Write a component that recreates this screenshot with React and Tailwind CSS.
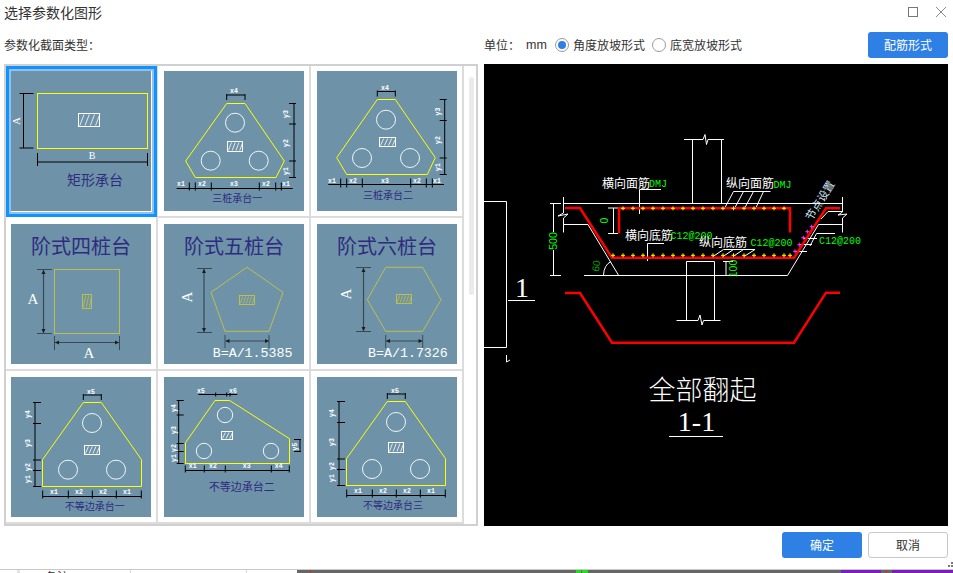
import React from "react";

const Y = "#ffff00";
const INK = "#2f2c80";
const SANS = '"Noto Sans CJK SC", sans-serif';
const SERIF = '"Liberation Serif", "Noto Sans CJK SC", serif';
const MONO = '"Liberation Mono", "Noto Sans CJK SC", monospace';
const PLAIN = '"Liberation Sans", sans-serif';

function Hatch({ x, y, w, h, color = "#fff", n = 4, dir = 1 }) {
  const step = w / n;
  const lines = [];
  for (let i = 0; i < n; i++) {
    const x0 = x + step * i + step * 0.25;
    lines.push(<line key={i} x1={x0} y1={y + h - 1} x2={x0 + (step * 0.8) * dir} y2={y + 1} stroke={color} strokeWidth="0.8" />);
  }
  return (
    <g>
      <rect x={x} y={y} width={w} height={h} fill="none" stroke={color} strokeWidth="1" />
      {lines}
    </g>
  );
}

function HDim({ y, xs, up = 3, down = 5, x0, x1 }) {
  return (
    <g stroke="#000" strokeWidth="1">
      <line x1={x0 ?? xs[0]} y1={y} x2={x1 ?? xs[xs.length - 1]} y2={y} />
      {xs.map((x) => <line key={x} x1={x} y1={y - up} x2={x} y2={y + down} />)}
    </g>
  );
}

function VDim({ x, ys, left = 5, right = 2 }) {
  return (
    <g stroke="#000" strokeWidth="1">
      <line x1={x} y1={ys[0]} x2={x} y2={ys[ys.length - 1]} />
      {ys.map((y) => <line key={y} x1={x - left} y1={y} x2={x + right} y2={y} />)}
    </g>
  );
}

function Tiny({ x, y, children }) {
  return <text x={x} y={y} fill="#fff" fontSize="6.5" fontWeight="700" fontFamily={MONO} textAnchor="middle">{children}</text>;
}
function TinyV({ x, y, children }) {
  return <text transform={`translate(${x} ${y}) rotate(-90)`} fill="#fff" fontSize="6.5" fontWeight="700" fontFamily={MONO} textAnchor="middle" dominantBaseline="middle">{children}</text>;
}
function Label({ x, y, size = 10, children }) {
  return <text x={x} y={y} fill={INK} fontSize={size} fontFamily={SANS} textAnchor="middle">{children}</text>;
}
function Poly({ points, color = Y }) {
  return <polygon points={points} fill="none" stroke={color} strokeWidth="1" />;
}
function Holes({ list, r = 9.5 }) {
  return list.map(([x, y]) => <circle key={x} cx={x} cy={y} r={r} fill="none" stroke="#fff" strokeWidth="0.9" />);
}

function Arrow({ x1, y1, x2, y2 }) {
  const v = x1 === x2;
  const a = 4;
  const b = 2;
  return (
    <g>
      <line x1={x1} y1={y1} x2={x2} y2={y2} stroke="#3a4a55" strokeWidth="1.2" />
      {v ? (
        <g fill="#1c1c1c">
          <polygon points={`${x1},${y1} ${x1 - b},${y1 + a} ${x1 + b},${y1 + a}`} />
          <polygon points={`${x2},${y2} ${x2 - b},${y2 - a} ${x2 + b},${y2 - a}`} />
        </g>
      ) : (
        <g fill="#1c1c1c">
          <polygon points={`${x1},${y1} ${x1 + a},${y1 - b} ${x1 + a},${y1 + b}`} />
          <polygon points={`${x2},${y2} ${x2 - a},${y2 - b} ${x2 - a},${y2 + b}`} />
        </g>
      )}
    </g>
  );
}

const OLIVE = "#bdbf4c";
const DIM = "#3a4a55";

function StepTitle({ children }) {
  return <text x="70" y="29.5" fill={INK} fontSize="20" fontFamily={SANS} textAnchor="middle">{children}</text>;
}

const drawings = [
  <>
    <rect x="26.5" y="22.5" width="110" height="55" fill="none" stroke={Y} strokeWidth="1" />
    <Hatch x={67.5} y={42.5} w={21} h={13} />
    <VDim x={12.5} ys={[22.5, 77]} left={4} right={10} />
    <text transform="translate(6.5 50) rotate(-90)" fill="#fff" fontSize="11" fontFamily={SERIF} textAnchor="middle" dominantBaseline="middle">A</text>
    <HDim y={91} xs={[26.5, 136.5]} up={9} down={4} />
    <text x="81" y="88" fill="#fff" fontSize="10" fontFamily={SERIF} textAnchor="middle">B</text>
    <Label x={84} y={114} size={14}>矩形承台</Label>
  </>,
  <>
    <Poly points="62.7,32.5 81,32.5 120.3,90 112,106.5 31.3,106.5 21.7,90" />
    <Holes list={[[71, 51.7], [46.7, 89.7], [94.7, 89.7]]} />
    <Hatch x={63.5} y={70.5} w={15} h={10} />
    <HDim y={24} xs={[62.7, 81]} up={1} down={5} />
    <Tiny x={70} y={22}>x4</Tiny>
    <VDim x={130} ys={[32.5, 53, 90, 106.5]} />
    <TinyV x={122} y={43}>y3</TinyV><TinyV x={122} y={72}>y2</TinyV><TinyV x={122} y={100}>y1</TinyV>
    <HDim y={117.5} xs={[25.3, 31.3, 47.3, 95.3, 111.7, 117.3]} x0={12.7} x1={128.7} up={6} down={2} />
    <Tiny x={17} y={115}>x1</Tiny><Tiny x={38} y={115}>x2</Tiny><Tiny x={70} y={115}>x3</Tiny><Tiny x={102} y={115}>x2</Tiny><Tiny x={122} y={115}>x1</Tiny>
    <Label x={73.3} y={131}>三桩承台一</Label>
  </>,
  <>
    <Poly points="60.3,28.5 78.3,28.5 118.3,86.7 110.3,103.5 29.7,103.5 19.7,86.7" />
    <Holes list={[[69, 48.7], [45, 87], [93, 87]]} />
    <Hatch x={62.5} y={66.5} w={16} h={9} />
    <HDim y={20.5} xs={[60.3, 78.3]} up={1} down={5} />
    <Tiny x={68} y={19}>x4</Tiny>
    <VDim x={127.7} ys={[28.5, 49.5, 87, 103.5]} />
    <TinyV x={121} y={40.5}>y3</TinyV><TinyV x={121} y={69}>y2</TinyV><TinyV x={121} y={96}>y1</TinyV>
    <HDim y={113.5} xs={[23.7, 29.7, 45.3, 93.7, 109.3, 115.3]} x0={11.3} x1={127} up={6} down={3} />
    <Tiny x={15} y={112}>x1</Tiny><Tiny x={36} y={112}>x2</Tiny><Tiny x={68} y={112}>x3</Tiny><Tiny x={100} y={112}>x2</Tiny><Tiny x={120} y={112}>x1</Tiny>
    <Label x={71} y={128}>三桩承台二</Label>
  </>,
  <>
    <StepTitle>阶式四桩台</StepTitle>
    <rect x="43.5" y="45.5" width="65" height="64" fill="none" stroke={OLIVE} strokeWidth="1" />
    <Hatch x={71.5} y={70.5} w={9} h={14} color={OLIVE} n={3} />
    <Arrow x1={32.5} y1={46} x2={32.5} y2={109} />
    <line x1="26" y1="45.5" x2="41" y2="45.5" stroke={DIM} />
    <line x1="26" y1="109.5" x2="41" y2="109.5" stroke={DIM} />
    <text x="22" y="80" fill="#fff" fontSize="15" fontFamily={SERIF} textAnchor="middle">A</text>
    <Arrow x1={44} y1={118.5} x2={108} y2={118.5} />
    <line x1="43.5" y1="112" x2="43.5" y2="126" stroke={DIM} />
    <line x1="108.5" y1="112" x2="108.5" y2="126" stroke={DIM} />
    <text x="78" y="134" fill="#fff" fontSize="15" fontFamily={SERIF} textAnchor="middle">A</text>
  </>,
  <>
    <StepTitle>阶式五桩台</StepTitle>
    <Poly color={OLIVE} points="83,43.3 119,68.3 105,107.3 61,107.3 47,68.3" />
    <Hatch x={75.5} y={71.5} w={15} h={9} color={OLIVE} n={5} />
    <Arrow x1={40} y1={45} x2={40} y2={108} />
    <line x1="33" y1="44.5" x2="48" y2="44.5" stroke={DIM} />
    <line x1="33" y1="108.5" x2="48" y2="108.5" stroke={DIM} />
    <text transform="translate(24.5 73) rotate(-90)" fill="#fff" fontSize="15" fontFamily={SERIF} textAnchor="middle" dominantBaseline="middle">A</text>
    <Arrow x1={61.5} y1={117} x2={105} y2={117} />
    <line x1="61" y1="111" x2="61" y2="124" stroke={DIM} />
    <line x1="105" y1="111" x2="105" y2="124" stroke={DIM} />
    <text x="48.7" y="133" fill="#fff" fontSize="13.3" fontFamily={MONO}>B=A/1.5385</text>
  </>,
  <>
    <StepTitle>阶式六桩台</StepTitle>
    <Poly color={OLIVE} points="68.7,43.3 105.7,43.3 124,75.7 105.7,107.3 68.7,107.3 50.3,75.7" />
    <Hatch x={79.5} y={70.5} w={15} h={9} color={OLIVE} n={5} />
    <Arrow x1={46.5} y1={44} x2={46.5} y2={107} />
    <line x1="39" y1="43.5" x2="54" y2="43.5" stroke={DIM} />
    <line x1="39" y1="107.5" x2="54" y2="107.5" stroke={DIM} />
    <text transform="translate(31 70) rotate(-90)" fill="#fff" fontSize="15" fontFamily={SERIF} textAnchor="middle" dominantBaseline="middle">A</text>
    <Arrow x1={69} y1={117} x2={105.5} y2={117} />
    <line x1="68.7" y1="111" x2="68.7" y2="124" stroke={DIM} />
    <line x1="105.7" y1="111" x2="105.7" y2="124" stroke={DIM} />
    <text x="51" y="133" fill="#fff" fontSize="13.3" fontFamily={MONO}>B=A/1.7326</text>
  </>,
  <>
    <Poly points="72.3,25.5 90.3,25.5 130.5,82.7 130.5,109.5 31.5,109.5 31.5,82.7" />
    <Holes list={[[81, 46], [57, 92.7], [105, 92.7]]} />
    <Hatch x={73.5} y={68.5} w={15} h={9} />
    <HDim y={18} xs={[72.3, 90.3]} up={1} down={5} />
    <Tiny x={80} y={16.5}>x5</Tiny>
    <VDim x={24} ys={[25.5, 46.5, 83, 93.5, 109.5]} left={2} right={6} />
    <TinyV x={17} y={37}>y4</TinyV><TinyV x={17} y={66}>y3</TinyV><TinyV x={17} y={90}>y2</TinyV><TinyV x={17} y={102}>y1</TinyV>
    <HDim y={119.5} xs={[31.7, 57.3, 81.3, 105.3, 130.3]} up={6} down={2} />
    <Tiny x={43} y={117}>x1</Tiny><Tiny x={68} y={117}>x2</Tiny><Tiny x={92} y={117}>x2</Tiny><Tiny x={116} y={117}>x1</Tiny>
    <Label x={83.7} y={133}>不等边承台一</Label>
  </>,
  <>
    <Poly points="51,23.5 65.7,23.5 125.5,61.7 125.5,86.5 21.5,86.5 21.5,65.7" />
    <Holes list={[[61, 38], [40, 74], [107, 74]]} r={7.7} />
    <Hatch x={57.5} y={54.5} w={11} h={8} n={3} />
    <HDim y={17.5} xs={[51.7, 62.7, 66]} x0={34.3} x1={73.3} up={2} down={2} />
    <Tiny x={37} y={15.5}>x5</Tiny><Tiny x={69} y={15.5}>x6</Tiny>
    <VDim x={14.7} ys={[23.5, 38, 66.5, 74.5, 86.5]} left={2} right={5} />
    <TinyV x={10} y={31}>y4</TinyV><TinyV x={10} y={53}>y3</TinyV><TinyV x={10} y={71}>y2</TinyV><TinyV x={10} y={81}>y1</TinyV>
    <VDim x={136} ys={[62.5, 74.5]} left={6} right={1} />
    <TinyV x={131} y={69.5}>y5</TinyV>
    <HDim y={93.5} xs={[21.3, 40.3, 61.3, 107.3, 125.3]} up={5} down={2} />
    <Tiny x={28.7} y={91}>x1</Tiny><Tiny x={49} y={91}>x2</Tiny><Tiny x={82.7} y={91}>x3</Tiny><Tiny x={114.7} y={91}>x4</Tiny>
    <Label x={77.7} y={114} size={11}>不等边承台二</Label>
  </>,
  <>
    <Poly points="70.3,24.5 88.3,24.5 128.5,81.7 128.5,108.5 29.5,108.5 29.5,81.7" />
    <Holes list={[[79, 45], [55, 92], [103, 92]]} />
    <Hatch x={71.5} y={65.5} w={15} h={10} />
    <HDim y={17} xs={[70.3, 88.3]} up={1} down={5} />
    <Tiny x={78} y={15.5}>x5</Tiny>
    <VDim x={22} ys={[24.5, 45.5, 82, 92.5, 108.5]} left={2} right={6} />
    <TinyV x={15} y={36}>y4</TinyV><TinyV x={15} y={65}>y3</TinyV><TinyV x={15} y={89}>y2</TinyV><TinyV x={15} y={101}>y1</TinyV>
    <HDim y={118.5} xs={[29.7, 55.3, 79.3, 103.3, 128.3]} up={6} down={2} />
    <Tiny x={41} y={116}>x1</Tiny><Tiny x={66} y={116}>x2</Tiny><Tiny x={90} y={116}>x2</Tiny><Tiny x={114} y={116}>x1</Tiny>
    <Label x={76} y={132}>不等边承台三</Label>
  </>,
];

const cellClass = [
  "",
  "w-[153px] h-[152px] pl-[6px] pt-[5px] border-r-2 border-b-2 border-[#dcdcdc]",
  "w-[153px] h-[152px] pl-[6px] pt-[5px] border-r-2 border-b-2 border-[#dcdcdc]",
  "w-[152px] h-[153px] pl-[5px] pt-[6px] border-r-2 border-b-2 border-[#dcdcdc]",
  "w-[153px] h-[153px] pl-[6px] pt-[6px] border-r-2 border-b-2 border-[#dcdcdc]",
  "w-[153px] h-[153px] pl-[6px] pt-[6px] border-r-2 border-b-2 border-[#dcdcdc]",
  "w-[152px] h-[153px] pl-[5px] pt-[6px] border-r-2 border-b-2 border-[#dcdcdc]",
  "w-[153px] h-[153px] pl-[6px] pt-[6px] border-r-2 border-b-2 border-[#dcdcdc]",
  "w-[153px] h-[153px] pl-[6px] pt-[6px] border-r-2 border-b-2 border-[#dcdcdc]",
];

function Thumb({ children }) {
  return (
    <svg viewBox="0 0 140 140" className="block h-[140px] w-[140px] bg-[#6e93a8]">
      {children}
    </svg>
  );
}

function Cell({ index }) {
  if (index === 0) {
    return (
      <div className="h-[152px] w-[152px] border-r-2 border-[#dcdcdc]">
        <div className="h-[151px] w-[151px] border-[3px] border-[#0f94ff]">
          <div className="h-[145px] w-[145px] border-[2px] border-[#90c0f6]">
            <Thumb>{drawings[0]}</Thumb>
          </div>
        </div>
      </div>
    );
  }
  return (
    <div className={cellClass[index]}>
      <Thumb>{drawings[index]}</Thumb>
    </div>
  );
}

function Green({ x, y, size = 10, children, fill = "#00ff00" }) {
  return <text x={x} y={y} fill={fill} fontSize={size} fontFamily={MONO}>{children}</text>;
}
function GreenV({ x, y, size = 10.5, children, fill = "#00ff00", angle = -90 }) {
  return <text transform={`translate(${x} ${y}) rotate(${angle})`} fill={fill} fontSize={size} fontFamily={PLAIN} textAnchor="middle" dominantBaseline="middle">{children}</text>;
}
function Note({ x, y, children }) {
  return <text x={x} y={y} fill="#fff" fontSize="12" fontFamily={SANS}>{children}</text>;
}

function Cad() {
  const topDots = [623, 633, 643, 653, 663, 673, 683, 693, 703, 713, 723, 733.5, 744, 754, 764, 774, 784];
  const botDots = [613, 623, 633, 643, 653, 663, 673, 683, 693, 703, 713, 723, 733.5, 744, 754, 764, 774, 784, 790];
  const pink = [[811.7, 226.7], [807.3, 231.7], [803.3, 237.7], [799.3, 244.7], [795, 251.3]];
  const plus = (x, y, c, k) => (
    <g key={k} stroke={c} strokeWidth="1">
      <line x1={x - 2} y1={y} x2={x + 2} y2={y} />
      <line x1={x} y1={y - 2} x2={x} y2={y + 2} />
    </g>
  );
  return (
    <svg viewBox="484 64 464 462" className="block h-[462px] w-[464px] bg-black">
      <g fill="none" stroke="#fff" strokeWidth="1">
        <polyline points="484,201.5 506.5,201.5 506.5,347.5 484,347.5" />
        <line x1="508" y1="300.5" x2="535" y2="300.5" />
        <polyline points="506.5,355 506.5,362 510,360" />
        <line x1="553.5" y1="203.5" x2="553.5" y2="232" />
        <line x1="553.5" y1="250" x2="553.5" y2="275.5" />
        <line x1="550" y1="203.5" x2="561" y2="203.5" />
        <line x1="550" y1="275.5" x2="561" y2="275.5" />
        <line x1="564" y1="203.5" x2="842.5" y2="203.5" />
        <polyline points="563.5,197 563.5,213 558,216 568,214 563.5,218 563.5,232.5" />
        <polyline points="563.5,224.5 588,224.5 618.7,275.5" />
        <line x1="584" y1="275.5" x2="787.5" y2="275.5" />
        <polyline points="787.5,275.5 818.5,224.5 842.5,224.5" />
        <polyline points="821,219 828,211.5 842.5,211.5" />
        <polyline points="842.5,197 842.5,212 838,215 847,214 842.5,218 842.5,232.5" />
        <line x1="692.5" y1="139.5" x2="692.5" y2="203.5" />
        <line x1="721.5" y1="139.5" x2="721.5" y2="203.5" />
        <polyline points="684,139.5 703,139.5 705,134.5 706.5,144.5 708,139.5 724,139.5" />
        <polyline points="639.5,214 639.5,189.5 661,189.5" />
        <polyline points="647.5,261 647.5,243.5 664,243.5" />
        <line x1="613.5" y1="208" x2="613.5" y2="233.5" />
        <line x1="608" y1="208" x2="618" y2="208" />
        <line x1="608" y1="233.5" x2="618" y2="233.5" />
        <path d="M603.5 275 Q604 265 611 261.5" />
        <line x1="733.5" y1="191.5" x2="770.5" y2="191.5" />
        <line x1="733.5" y1="191.5" x2="725" y2="207.5" />
        <line x1="743.5" y1="191.5" x2="735" y2="207.5" />
        <line x1="753.5" y1="191.5" x2="745" y2="207.5" />
        <line x1="763.5" y1="191.5" x2="756" y2="207.5" />
        <line x1="723.5" y1="249.5" x2="755" y2="249.5" />
        <line x1="723.5" y1="249.5" x2="713" y2="256.5" />
        <line x1="733.5" y1="249.5" x2="723" y2="256.5" />
        <line x1="743.5" y1="249.5" x2="733" y2="256.5" />
        <line x1="755" y1="249.5" x2="744" y2="256.5" />
        <line x1="726" y1="261.5" x2="726" y2="275.5" />
        <line x1="723" y1="261.5" x2="733" y2="261.5" />
        <polyline points="810,246 816.5,233.5 835,233.5" />
        <line x1="803" y1="238.5" x2="817" y2="238.5" />
        <line x1="800" y1="244.5" x2="812" y2="244.5" />
        <line x1="795" y1="251.5" x2="807" y2="251.5" />
        <polyline points="686.5,320.5 686.5,261.5 714.5,261.5 714.5,320.5" />
        <polyline points="676.5,320.5 698,320.5 700,315 702,325 703.5,320.5 720.5,320.5" />
        <line x1="669" y1="436.5" x2="723" y2="436.5" />
      </g>
      <g fill="none" stroke="#ff0000" strokeWidth="2.5">
        <polyline points="565,208 580,208 612,257.8 794,257.8 826,208.3 840,208.3" />
        <polyline points="619,233.5 619,208.3 790,208.3 790,232.5" />
        <polyline points="565,293 580,293 612,342.7 794,342.7 826,292.7 840,292.7" />
      </g>
      {topDots.map((x, i) => plus(x, 208.3, "#ffff00", "t" + i))}
      {botDots.map((x, i) => plus(x, 255.3, "#ffff00", "b" + i))}
      {pink.map(([x, y], i) => plus(x, y, "#ff33ff", "p" + i))}
      <Note x={602} y={187.5}>横向面筋</Note>
      <Green x={649} y={187}>DMJ</Green>
      <Note x={625} y={239.5}>横向底筋</Note>
      <Green x={670.5} y={239}>C12@200</Green>
      <Note x={726} y={188}>纵向面筋</Note>
      <Green x={773.5} y={187.5}>DMJ</Green>
      <Note x={699} y={246.5}>纵向底筋</Note>
      <Green x={750.5} y={245.5}>C12@200</Green>
      <Green x={819} y={243.5}>C12@200</Green>
      <GreenV x={554} y={241}>500</GreenV>
      <GreenV x={605} y={220.5}>0</GreenV>
      <GreenV x={734} y={268.5}>100</GreenV>
      <GreenV x={597} y={266} size={10} fill="#00a800" angle={-80}>60</GreenV>
      <text transform="translate(821 201) rotate(-58)" fill="#d7e4f7" fontSize="11" fontFamily={SANS} textAnchor="middle" dominantBaseline="middle">节点设置</text>
      <text x="522" y="297" fill="#fff" fontSize="28" fontFamily={SERIF} textAnchor="middle">1</text>
      <text x="702.5" y="400" fill="#fff" fontSize="27" fontFamily={SANS} fontWeight="300" textAnchor="middle">全部翻起</text>
      <text x="696.5" y="431" fill="#fff" fontSize="28" fontFamily={SERIF} textAnchor="middle">1-1</text>
    </svg>
  );
}

function Radio({ checked, children }) {
  return (
    <span className="flex items-center gap-1">
      <span className="flex h-[14px] w-[14px] items-center justify-center rounded-full border border-[#9a9a9a] bg-white">
        {checked && <span className="h-[8px] w-[8px] rounded-full bg-[#2f80e4]" />}
      </span>
      <span>{children}</span>
    </span>
  );
}

export default function App() {
  return (
    <div className="flex h-[573px] w-[953px] flex-col overflow-hidden bg-white text-[12px] text-[#333]" style={{ fontFamily: '"Noto Sans CJK SC", "Liberation Sans", sans-serif' }}>
      <div className="flex h-[24px] shrink-0 items-center justify-between pl-[4px] pr-[7px] text-[14px]">
        <span>选择参数化图形</span>
        <div className="flex items-center gap-[18px]">
          <span className="block h-[10px] w-[10px] border border-[#777]" />
          <svg width="10" height="10" viewBox="0 0 10 10" className="block" fill="none" stroke="#8a8a8a" strokeWidth="1">
            <line x1="0" y1="0" x2="10" y2="10" />
            <line x1="10" y1="0" x2="0" y2="10" />
          </svg>
        </div>
      </div>

      <div className="flex h-[40px] shrink-0 items-center pt-[2px]">
        <div className="w-[484px] pl-[4px]">参数化截面类型：</div>
        <div className="flex w-[464px] items-center justify-between">
          <div className="flex items-center">
            <span className="w-[42px]">单位：</span>
            <span className="w-[29px]" style={{ fontFamily: '"Liberation Sans", sans-serif', fontSize: 12.5 }}>mm</span>
            <Radio checked>角度放坡形式</Radio>
            <span className="w-[7px]" />
            <Radio>底宽放坡形式</Radio>
          </div>
          <button className="h-[26px] w-[80px] rounded-[3px] bg-[#2f80e4] text-[12px] text-white">配筋形式</button>
        </div>
      </div>

      <div className="flex h-[462px] shrink-0 pl-[4px]">
        <div className="flex h-[462px] w-[474px] border-2 border-[#d0d0d0]">
          <div className="grid w-[458px] grid-cols-[152px_153px_153px] content-start">
            {drawings.map((_, i) => <Cell key={i} index={i} />)}
          </div>
          <div className="flex-1 pl-[5px] pt-[11px]">
            <div className="h-[218px] w-[5px] rounded-full bg-[#ebebeb]" />
          </div>
        </div>
        <div className="ml-[6px]">
          <Cad />
        </div>
      </div>

      <div className="flex h-[43px] shrink-0 justify-end">
        <div className="flex gap-[6px] pt-[6px]">
          <button className="h-[26px] w-[80px] rounded-[3px] bg-[#2f80e4] text-[12px] text-white">确定</button>
          <button className="h-[26px] w-[80px] rounded-[3px] border border-[#c8c8c8] bg-white text-[12px] text-[#333]">取消</button>
        </div>
        <div className="flex w-[5px] items-end pb-[1px]">
          <svg width="5" height="6" viewBox="0 0 5 6" className="block" fill="#777">
            <rect x="3" y="0" width="2" height="2" />
            <rect x="0" y="3" width="2" height="2" />
            <rect x="3" y="3" width="2" height="2" />
          </svg>
        </div>
      </div>

      <div className="flex h-[4px] shrink-0 border-t border-[#c8c8c8]">
        <div className="w-[17px]" />
        <div className="h-[3px] w-[3px] bg-[#e4e4e4]" />
        <div className="w-[25px]" />
        <div className="w-[86px] overflow-hidden border-r border-[#d8d8d8] text-[12px] leading-[14px]">备注</div>
        <div className="w-[116px] border-r border-[#d8d8d8]" />
        <div className="w-[50px]" />
        <div className="w-[13px] bg-[#666]" />
        <div className="w-[1px] bg-[#d22]" />
        <div className="w-[265px] bg-[#666]" />
        <div className="w-[5px] bg-[#22dd22]" />
        <div className="w-[1px] bg-[#666]" />
        <div className="w-[6px] bg-[#22dd22]" />
        <div className="w-[253px] bg-[#666]" />
        <div className="w-[40px] bg-[#7a1fb5]" />
        <div className="w-[5px] bg-[#666]" />
        <div className="w-[1px] bg-[#d22]" />
        <div className="w-[5px] bg-[#666]" />
        <div className="flex-1 bg-[#7a1fb5]" />
      </div>
    </div>
  );
}
